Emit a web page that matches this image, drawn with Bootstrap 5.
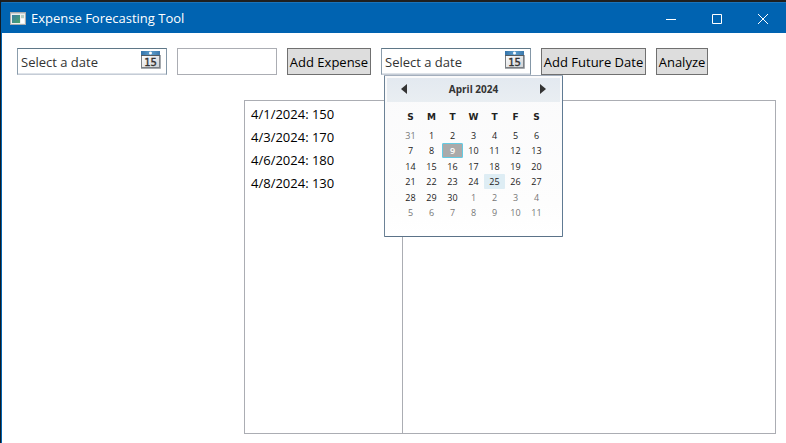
<!DOCTYPE html>
<html lang="en">
<head>
<meta charset="utf-8">
<meta name="viewport" content="width=device-width, initial-scale=1">
<title>Expense Forecasting Tool</title>
<link href="https://cdn.jsdelivr.net/npm/bootstrap@5.3.0/dist/css/bootstrap.min.css" rel="stylesheet">
<style>
body { font-family: "Open Sans", "Noto Sans", sans-serif; font-size: 13px; line-height: 20px; color: #000; background: #fff; }
.app-window { border-top: 2px solid #1f1f1f; border-left: 1px solid #111c26; }
.app-frame { border-left: 1px solid #0063b1; }
.title-bar { height: 31px; background: #0063b1; border-top: 1px solid #1a73b9; color: #fff; padding-left: 8px; gap: 5px; }
.title-text { font-size: 13px; font-weight: 400; }
.caption-btn { width: 46px; height: 30px; border: 0; padding: 0 0 2px; background: transparent; color: #fff; }
.tool-row { gap: 10px; padding: 15px 10px 0 15px; }
.date-box { width: 150px; height: 27px; background: #fff; border: 1px solid; border-color: #5f7787 #8497a7 #c5ccd6 #8b9dac; box-shadow: inset 0 -1px #dde2e8; }
.date-input { min-width: 0; border: 0; outline: 0; padding: 0 0 0 3px; background: transparent; color: #333; }
.date-input::placeholder { color: #333; opacity: 1; }
.cal-btn { border: 0; padding: 0; background: transparent; margin-right: 5px; height: 20px; }
.amount-box { width: 100px; height: 27px; border: 1px solid #abadb3; border-radius: 0; padding: 0 3px; }
.tool-btn { height: 27px; border: 1px solid #707070; border-radius: 0; background: #ddd; color: #000; padding: 0; white-space: nowrap; }
.w-add { width: 84px; }
.w-future { width: 105px; }
.w-analyze { width: 52px; }
.cal-popup { top: 26px; left: 2px; width: 179px; height: 162px; z-index: 5; padding: 2px; background: linear-gradient(#fafafb, #fdfdfd 80%, #fff); border: 1px solid; border-color: #a3aebc #5f7a93 #5b7288 #6c8296; border-radius: 1px; }
.cal-head { height: 24px; background: linear-gradient(#e3e9f0, #e9eef2); padding: 0 13px; }
.cal-title { font-size: 10px; font-weight: 700; color: #333; line-height: 22px; }
.arrow-btn { border: 0; padding: 0; background: transparent; line-height: 0; width: 8px; height: 21px; }
.cal-grid { width: 147px; margin: 4px 0 0 13px; table-layout: fixed; border-collapse: collapse; font-size: 9px; line-height: 15px; text-align: center; color: #222; }
.cal-grid th { height: 21px; padding: 0; font: 700 9px/20px "DejaVu Sans", sans-serif; text-align: center; }
.cal-grid td { height: 15px; padding: 0; }
.cal-grid tbody tr:nth-child(odd) td { height: 16px; }
.day-btn { display: block; width: 21px; height: 15px; border: 0; padding: 0; background: transparent; color: #222; line-height: 15px; font-size: 9px; }
.day-btn.day-out { color: #777; }
.day-btn.day-today { background: #aaa; color: #fff; font-weight: 600; border: 1px solid #64cbe3; line-height: 13px; border-radius: 1px; }
.day-btn.day-hover { background: #deedf4; border-radius: 1px; }
.result-area { padding: 25px 10px 9px 242px; }
.result-box { border: 1px solid #abadb3; }
.expense-list { width: 158px; border-right: 1px solid #abadb3; padding: 2px 6px; }
.expense-list li { height: 23px; line-height: 22px; }
</style>
<script src="https://cdn.jsdelivr.net/npm/bootstrap@5.3.0/dist/js/bootstrap.bundle.min.js"></script>
</head>
<body>
<svg class="position-absolute" width="0" height="0" aria-hidden="true">
  <defs>
    <linearGradient id="calBlue" x1="0" y1="0" x2="1" y2="0"><stop offset="0" stop-color="#3472a8"/><stop offset=".5" stop-color="#5c9dcc"/><stop offset="1" stop-color="#3c78ab"/></linearGradient>
    <linearGradient id="calPage" x1="0" y1="0" x2="1" y2="1"><stop offset="0" stop-color="#fff"/><stop offset="1" stop-color="#cfd2d5"/></linearGradient>
    <linearGradient id="appGreen" x1="0" y1="0" x2="1" y2="1"><stop offset="0" stop-color="#397fa5"/><stop offset="1" stop-color="#4aa36b"/></linearGradient>
  </defs>
</svg>
<div class="app-window min-vh-100 d-flex">
  <div class="app-frame flex-grow-1 d-flex flex-column">
    <header class="title-bar d-flex align-items-center">
      <svg width="16" height="13" viewBox="0 0 16 13" aria-hidden="true">
        <rect x=".5" y=".5" width="15" height="12" fill="#eef0ef" stroke="#a8abad"/>
        <rect x="1" y="1" width="14" height="1" fill="#cdd1d3"/>
        <rect x="2" y="3" width="8" height="8" fill="url(#appGreen)"/>
        <rect x="11" y="3" width="3" height="3" fill="#b5cfc5"/><rect x="11" y="7" width="3" height="4" fill="#fff"/>
      </svg>
      <h1 class="title-text mb-0 lh-1 flex-grow-1">Expense Forecasting Tool</h1>
      <div class="d-flex">
        <button class="caption-btn" type="button" aria-label="Minimize"><svg width="10" height="10" viewBox="0 0 10 10"><path d="M0 5.5h10" stroke="#fff"/></svg></button>
        <button class="caption-btn" type="button" aria-label="Maximize"><svg width="10" height="10" viewBox="0 0 10 10"><path d="M.5.5h9v9h-9z" fill="none" stroke="#fff"/></svg></button>
        <button class="caption-btn" type="button" aria-label="Close"><svg width="10" height="10" viewBox="0 0 10 10"><path d="M0 0l10 10M10 0L0 10" stroke="#fff"/></svg></button>
      </div>
    </header>
    <main class="flex-grow-1 d-flex flex-column">
      <div class="tool-row d-flex flex-wrap">
        <div class="date-box d-flex">
          <input class="date-input flex-grow-1" type="text" placeholder="Select a date" aria-label="Expense date">
          <button class="cal-btn" type="button" aria-label="Open calendar">
            <svg class="d-block" width="20" height="20" viewBox="0 0 20 20"><rect x=".5" y="5.5" width="18" height="13" fill="url(#calPage)" stroke="#7b8085"/><path d="M0 19.500h19.500V6" fill="none" stroke="#a5a9ad"/><rect y="2" width="19" height="4" fill="url(#calBlue)"/><path d="M0 6.500h19" stroke="#555b60"/><circle cx="9.500" cy="4" r="1.500" fill="#fff"/><text x="9.500" y="17" text-anchor="middle" font-family="DejaVu Sans" font-size="10" fill="#333" stroke="#333" stroke-width=".4">15</text></svg>
          </button>
        </div>
        <input class="amount-box" type="text" aria-label="Amount">
        <button class="tool-btn w-add" type="button">Add Expense</button>
        <div class="date-box d-flex position-relative">
          <input class="date-input flex-grow-1" type="text" placeholder="Select a date" aria-label="Future date">
          <button class="cal-btn" type="button" aria-label="Open calendar" aria-expanded="true">
            <svg class="d-block" width="20" height="20" viewBox="0 0 20 20"><rect x=".5" y="5.5" width="18" height="13" fill="url(#calPage)" stroke="#7b8085"/><path d="M0 19.500h19.500V6" fill="none" stroke="#a5a9ad"/><rect y="2" width="19" height="4" fill="url(#calBlue)"/><path d="M0 6.500h19" stroke="#555b60"/><circle cx="9.500" cy="4" r="1.500" fill="#fff"/><text x="9.500" y="17" text-anchor="middle" font-family="DejaVu Sans" font-size="10" fill="#333" stroke="#333" stroke-width=".4">15</text></svg>
          </button>
          <div class="cal-popup position-absolute">
            <div class="cal-head d-flex justify-content-between">
              <button class="arrow-btn" type="button" aria-label="Previous month"><svg width="6" height="10" viewBox="0 0 6 10"><path d="M6 0v10L0 5z" fill="#333"/></svg></button>
              <span class="cal-title">April 2024</span>
              <button class="arrow-btn" type="button" aria-label="Next month"><svg width="6" height="10" viewBox="0 0 6 10"><path d="M0 0v10l6-5z" fill="#333"/></svg></button>
            </div>
            <table class="cal-grid">
              <thead><tr><th scope="col">S</th><th scope="col">M</th><th scope="col">T</th><th scope="col">W</th><th scope="col">T</th><th scope="col">F</th><th scope="col">S</th></tr></thead>
              <tbody>
                <tr><td><button class="day-btn day-out">31</button></td><td><button class="day-btn">1</button></td><td><button class="day-btn">2</button></td><td><button class="day-btn">3</button></td><td><button class="day-btn">4</button></td><td><button class="day-btn">5</button></td><td><button class="day-btn">6</button></td></tr>
                <tr><td><button class="day-btn">7</button></td><td><button class="day-btn">8</button></td><td><button class="day-btn day-today">9</button></td><td><button class="day-btn">10</button></td><td><button class="day-btn">11</button></td><td><button class="day-btn">12</button></td><td><button class="day-btn">13</button></td></tr>
                <tr><td><button class="day-btn">14</button></td><td><button class="day-btn">15</button></td><td><button class="day-btn">16</button></td><td><button class="day-btn">17</button></td><td><button class="day-btn">18</button></td><td><button class="day-btn">19</button></td><td><button class="day-btn">20</button></td></tr>
                <tr><td><button class="day-btn">21</button></td><td><button class="day-btn">22</button></td><td><button class="day-btn">23</button></td><td><button class="day-btn">24</button></td><td><button class="day-btn day-hover">25</button></td><td><button class="day-btn">26</button></td><td><button class="day-btn">27</button></td></tr>
                <tr><td><button class="day-btn">28</button></td><td><button class="day-btn">29</button></td><td><button class="day-btn">30</button></td><td><button class="day-btn day-out">1</button></td><td><button class="day-btn day-out">2</button></td><td><button class="day-btn day-out">3</button></td><td><button class="day-btn day-out">4</button></td></tr>
                <tr><td><button class="day-btn day-out">5</button></td><td><button class="day-btn day-out">6</button></td><td><button class="day-btn day-out">7</button></td><td><button class="day-btn day-out">8</button></td><td><button class="day-btn day-out">9</button></td><td><button class="day-btn day-out">10</button></td><td><button class="day-btn day-out">11</button></td></tr>
              </tbody>
            </table>
          </div>
        </div>
        <button class="tool-btn w-future" type="button">Add Future Date</button>
        <button class="tool-btn w-analyze" type="button">Analyze</button>
      </div>
      <section class="result-area flex-grow-1 d-flex">
        <div class="result-box flex-grow-1 d-flex">
          <ul class="expense-list list-unstyled mb-0">
            <li>4/1/2024: 150</li>
            <li>4/3/2024: 170</li>
            <li>4/6/2024: 180</li>
            <li>4/8/2024: 130</li>
          </ul>
          <div class="flex-grow-1"></div>
        </div>
      </section>
    </main>
  </div>
</div>
</body>
</html>
